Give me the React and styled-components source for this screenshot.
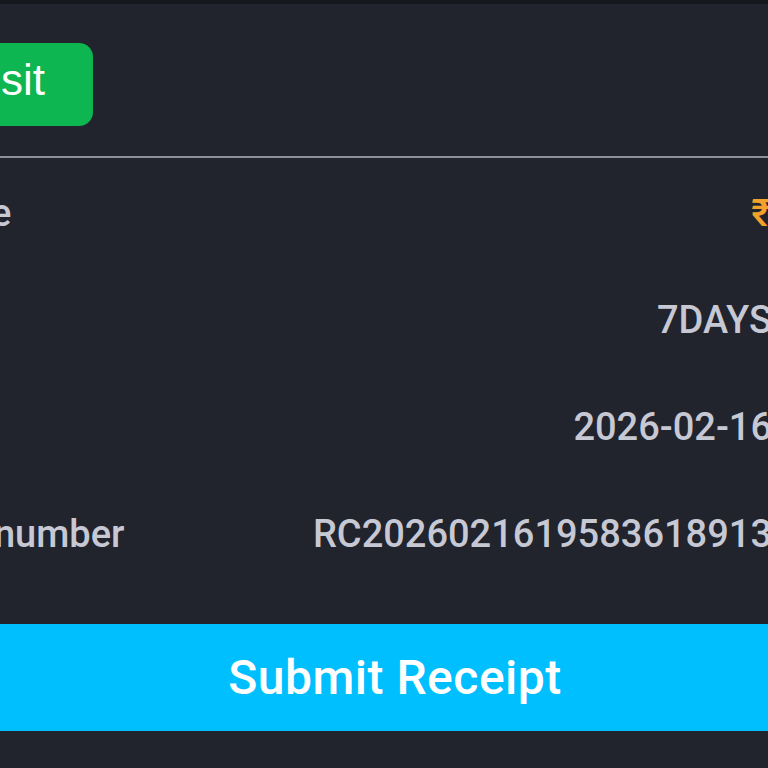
import React from 'react';
import styled, { createGlobalStyle } from 'styled-components';

const GlobalStyle = createGlobalStyle`
  html, body {
    margin: 0;
    padding: 0;
    background: #21232d;
    overflow: hidden;
  }
`;

const Screen = styled.div`
  width: 768px;
  height: 768px;
  overflow: hidden;
  background: #21232d;
  border-top: 4px solid #16181d;
  box-sizing: border-box;
`;

const Sheet = styled.div`
  margin-left: -110px;
  width: 1010px;
  display: flex;
  flex-direction: column;
`;

const TopBar = styled.div`
  display: flex;
  padding: 39px 0 30px;
  border-bottom: 2px solid #8e9099;
`;

const DepositButton = styled.button`
  height: 83px;
  width: 203px;
  border: none;
  border-radius: 14px;
  background: #0db650;
  color: #ffffff;
  font-family: 'Liberation Sans', Arial, sans-serif;
  font-size: 44px;
  text-align: right;
  padding: 0 48px 10px 0;
`;

const Details = styled.div`
  display: flex;
  flex-direction: column;
  margin-top: 2px;
`;

const Row = styled.div`
  display: flex;
  align-items: center;
  justify-content: space-between;
  height: 107px;
  line-height: 107px;
  padding-right: 64px;
  font-family: Roboto, 'Liberation Sans', sans-serif;
  font-size: 38px;
  font-weight: 500;
  color: #c6c8d4;
`;

const Label = styled.span`
  white-space: nowrap;
`;

const ValueGroup = styled.span`
  display: flex;
  align-items: center;
  gap: 24px;
`;

const Value = styled.span`
  white-space: nowrap;
  color: ${(p) => (p.$accent ? '#f2a12c' : '#c6c8d4')};
`;

const CopyIcon = styled.svg`
  width: 40px;
  height: 40px;
  flex-shrink: 0;
`;

const SubmitButton = styled.button`
  margin-top: 36px;
  height: 107px;
  width: 100%;
  border: none;
  background: #00bfff;
  color: #ffffff;
  font-family: Roboto, 'Liberation Sans', sans-serif;
  font-size: 48px;
  font-weight: 500;
  letter-spacing: 0.5px;
`;

const rows = [
  { label: 'Charge', value: '₹500', accent: true },
  { label: 'Type', value: '7DAYS', copy: true },
  { label: 'Time', value: '2026-02-16', copy: true },
  { label: 'Order number', value: 'RC2026021619583618913', copy: true },
];

const Copy = () => (
  <CopyIcon viewBox="0 0 24 24" fill="none" stroke="#c6c8d4" strokeWidth="2">
    <rect x="8" y="8" width="13" height="13" rx="2" />
    <path d="M4 16V5a1 1 0 0 1 1-1h11" />
  </CopyIcon>
);

export default function App() {
  return (
    <Screen>
      <GlobalStyle />
      <Sheet>
        <TopBar>
          <DepositButton>Deposit</DepositButton>
        </TopBar>
        <Details>
          {rows.map((r) => (
            <Row key={r.label}>
              <Label>{r.label}</Label>
              <ValueGroup>
                <Value $accent={r.accent}>{r.value}</Value>
                {r.copy ? <Copy /> : null}
              </ValueGroup>
            </Row>
          ))}
        </Details>
        <SubmitButton>Submit Receipt</SubmitButton>
      </Sheet>
    </Screen>
  );
}
